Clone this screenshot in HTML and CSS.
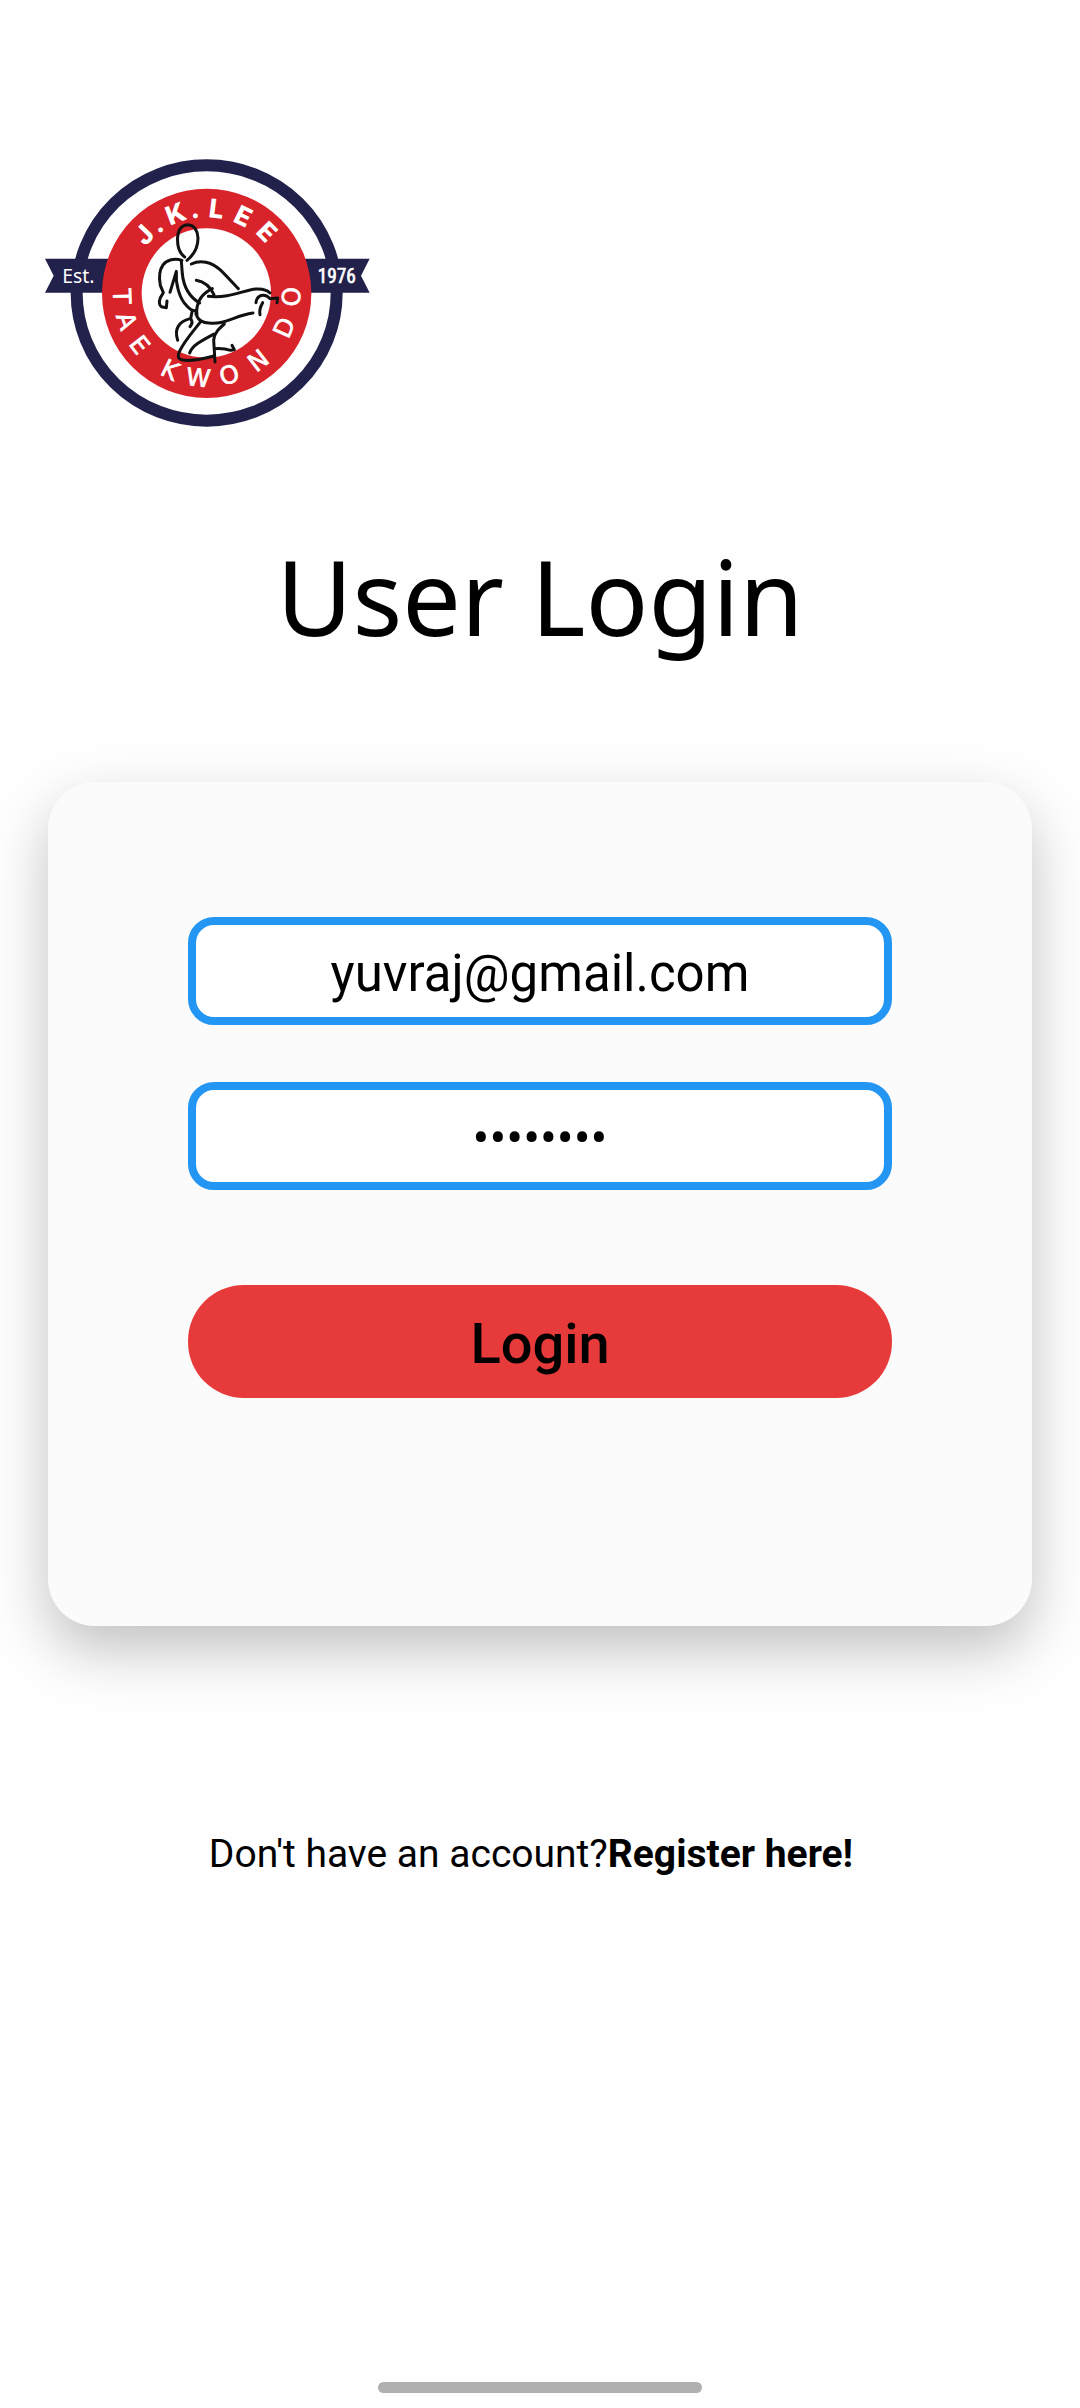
FILE: index.html
```html
<!DOCTYPE html>
<html lang="en">
<head>
<meta charset="utf-8">
<meta name="viewport" content="width=device-width, initial-scale=1">
<title>User Login</title>
<link rel="stylesheet" href="styles.css">
</head>
<body class="page">
<main class="screen">
  <svg class="logo" viewBox="0 0 1080 900" role="img" aria-label="J.K. Lee Tae Kwon Do">
    <ellipse class="logo-ring" cx="530" cy="459" rx="390" ry="383"/>
    <path class="logo-ribbon" d="M45 356H1019L993 407L1019 458H45L71 407Z"/>
    <circle class="logo-band" cx="530" cy="460" r="314"/>
    <circle class="logo-core" cx="529" cy="459" r="194"/>
    <text class="logo-name" x="346 385 420 484 534 606 674" y="320 283 257 236 231 243 278" rotate="-46 -37 -21 -9 7 26 45">J.K.LEE</text>
    <text class="logo-art" x="249 257 294 340 387 466 577 679 740 775 809" y="447 527 612 660 702 735 737 699 650 599 500" rotate="88 71 52 40 26 6 -16 -38 -50 -66 -88">TAE KWON DO</text>
    <text class="logo-est" x="97" y="429">Est.</text>
    <text class="logo-year" x="863" y="430">1976</text>
    <g class="logo-figure">
      <path d="M464 351C446 338 441 316 443 290C445 267 457 254 474 254C493 255 503 272 504 294C504 322 492 344 471 361"/>
      <path d="M456 361C434 354 410 359 399 375C388 390 387 415 391 436L400 458L391 473C386 486 388 497 394 500L409 503L411 483"/>
      <path d="M454 364L457 402C461 440 480 472 509 489"/>
      <path d="M420 457L439 394C436 430 448 476 470 497C479 507 491 514 499 512L498 523"/>
      <path d="M484 372C512 358 544 366 570 389C590 408 607 428 625 446"/>
      <path d="M499 421C523 425 541 441 552 464"/>
      <path d="M547 446C519 459 502 482 500 512L501 529C506 541 517 548 537 549C588 554 612 527 669 519"/>
      <path d="M535 469C600 476 640 450 678 447C698 446 712 450 720 459"/>
      <path d="M678 488C680 471 693 461 710 468L721 476L743 474L741 488M698 488C691 500 687 511 690 524"/>
      <path d="M486 516L482 536C489 545 487 552 480 560M480 536C446 545 432 567 443 601"/>
      <path d="M512 545C493 570 465 600 449 633C440 653 446 660 465 661C500 663 525 655 552 648"/>
      <path d="M583 552C568 565 553 578 551 600L555 666M552 582C518 600 486 616 479 639M555 626C574 625 590 627 602 631L613 629L606 616"/>
    </g>
  </svg>

  <h1 class="title">User Login</h1>

  <form class="card">
    <input class="field" type="email" aria-label="Email" value="yuvraj@gmail.com">
    <input class="field field-password" type="password" aria-label="Password" value="password">
    <button class="submit" type="button">Login</button>
  </form>

  <p class="register">Don't have an account?<a class="register-link" href="#register">Register here!</a></p>
</main>
<div class="home-bar"></div>
</body>
</html>
```

FILE: styles.css
```css
* {
  box-sizing: border-box;
}

.page {
  display: flex;
  flex-direction: column;
  align-items: center;
  min-height: 100vh;
  margin: 0;
  padding-bottom: 15px;
  background: #fefefe;
  color: #000;
  font-family: Roboto, sans-serif;
}

.screen {
  display: flex;
  flex: 1;
  flex-direction: column;
  width: 100%;
  padding: 140px 48px 0;
}

.logo {
  width: 360px;
  height: 300px;
  margin-left: -18px;
}

.logo-ring {
  fill: #fefefe;
  stroke: #21214b;
  stroke-width: 36;
}

.logo-ribbon {
  fill: #21214b;
}

.logo-band {
  fill: #d8232a;
}

.logo-core {
  fill: #fefefe;
}

.logo-name,
.logo-art,
.logo-est,
.logo-year {
  fill: #fff;
}

.logo-name {
  font: 800 78px Inter, sans-serif;
}

.logo-art {
  stroke: #fff;
  stroke-width: 2;
  font: 400 74px "DejaVu Sans", sans-serif;
}

.logo-est {
  font: 400 58px "Noto Sans", sans-serif;
}

.logo-year {
  stroke: #fff;
  stroke-width: 2;
  font: 400 58px "Liberation Sans Narrow", "Roboto Condensed", Roboto, sans-serif;
}

.logo-figure {
  fill: none;
  stroke: #111;
  stroke-width: 9;
  stroke-linecap: round;
  stroke-linejoin: round;
}

.title {
  margin: 84px 0 0;
  font: 400 104px/144px "Noto Sans", sans-serif;
  text-align: center;
}

.card {
  display: flex;
  flex-direction: column;
  margin-top: 114px;
  padding: 135px 140px 228px;
  border-radius: 47px;
  background: #fbfbfb;
  box-shadow: 0 24px 56px rgba(0, 0, 0, 0.24);
}

.field {
  width: 100%;
  height: 108px;
  margin: 0 0 57px;
  padding: 5px 24px 0;
  border: 8px solid #2396f3;
  border-radius: 26px;
  outline: 0;
  background: #fff;
  color: #000;
  font: 400 51px Roboto, sans-serif;
  text-align: center;
}

.field-password {
  margin-bottom: 95px;
  padding-top: 4px;
  font-size: 50px;
}

.submit {
  height: 113px;
  padding: 4px 0 0;
  border: 0;
  border-radius: 56px;
  background: #e73a3a;
  color: #000;
  font: 500 56px Roboto, sans-serif;
}

.register {
  margin: 204px 18px 0 0;
  font-size: 39px;
  line-height: 48px;
  text-align: center;
}

.register-link {
  color: inherit;
  font-weight: 700;
  text-decoration: none;
}

.home-bar {
  width: 30%;
  height: 11px;
  border-radius: 6px;
  background: #b0b0b0;
}
```
